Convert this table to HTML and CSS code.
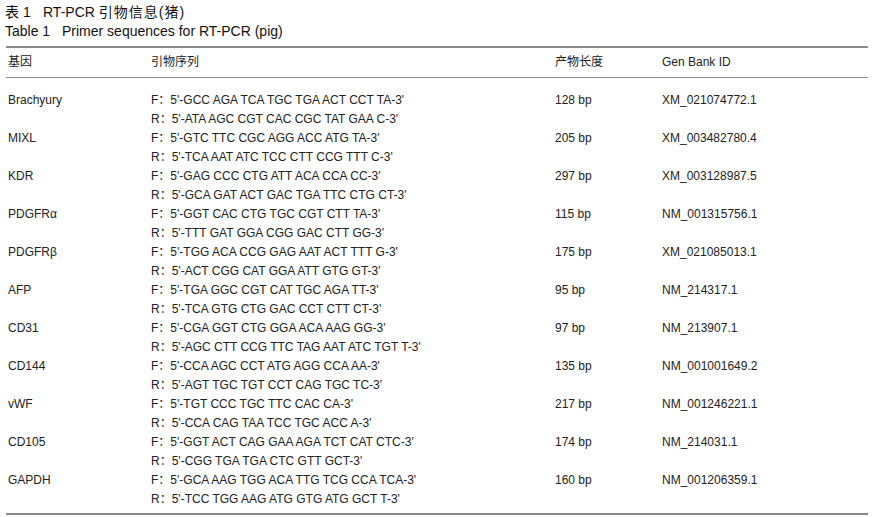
FILE: index.html
```html
<!DOCTYPE html>
<html lang="zh">
<head>
<meta charset="utf-8">
<title>Table 1</title>
<link rel="stylesheet" href="styles.css">
</head>
<body>
<div class="caption">
  <div class="cap-line"><span class="cap-no">表 1</span>RT-PCR <span class="cap-cjk">引物信息(猪)</span></div>
  <div class="cap-line"><span class="cap-no cap-no-en">Table 1</span>Primer sequences for RT-PCR (pig)</div>
</div>
<div class="table">
  <div class="row head">
    <div>基因</div>
    <div class="cjk-head">引物序列</div>
    <div class="cjk-head">产物长度</div>
    <div>Gen Bank ID</div>
  </div>
  <div class="body">
    <div class="row"><div>Brachyury</div><div class="primers"><div>F<span class="sep">：</span>5'-GCC AGA TCA TGC TGA ACT CCT TA-3'</div><div>R<span class="sep">：</span>5'-ATA AGC CGT CAC CGC TAT GAA C-3'</div></div><div>128 bp</div><div>XM_021074772.1</div></div>
    <div class="row"><div>MIXL</div><div class="primers"><div>F<span class="sep">：</span>5'-GTC TTC CGC AGG ACC ATG TA-3'</div><div>R<span class="sep">：</span>5'-TCA AAT ATC TCC CTT CCG TTT C-3'</div></div><div>205 bp</div><div>XM_003482780.4</div></div>
    <div class="row"><div>KDR</div><div class="primers"><div>F<span class="sep">：</span>5'-GAG CCC CTG ATT ACA CCA CC-3'</div><div>R<span class="sep">：</span>5'-GCA GAT ACT GAC TGA TTC CTG CT-3'</div></div><div>297 bp</div><div>XM_003128987.5</div></div>
    <div class="row"><div>PDGFRα</div><div class="primers"><div>F<span class="sep">：</span>5'-GGT CAC CTG TGC CGT CTT TA-3'</div><div>R<span class="sep">：</span>5'-TTT GAT GGA CGG GAC CTT GG-3'</div></div><div>115 bp</div><div>NM_001315756.1</div></div>
    <div class="row"><div>PDGFRβ</div><div class="primers"><div>F<span class="sep">：</span>5'-TGG ACA CCG GAG AAT ACT TTT G-3'</div><div>R<span class="sep">：</span>5'-ACT CGG CAT GGA ATT GTG GT-3'</div></div><div>175 bp</div><div>XM_021085013.1</div></div>
    <div class="row"><div>AFP</div><div class="primers"><div>F<span class="sep">：</span>5'-TGA GGC CGT CAT TGC AGA TT-3'</div><div>R<span class="sep">：</span>5'-TCA GTG CTG GAC CCT CTT CT-3'</div></div><div>95 bp</div><div>NM_214317.1</div></div>
    <div class="row"><div>CD31</div><div class="primers"><div>F<span class="sep">：</span>5'-CGA GGT CTG GGA ACA AAG GG-3'</div><div>R<span class="sep">：</span>5'-AGC CTT CCG TTC TAG AAT ATC TGT T-3'</div></div><div>97 bp</div><div>NM_213907.1</div></div>
    <div class="row"><div>CD144</div><div class="primers"><div>F<span class="sep">：</span>5'-CCA AGC CCT ATG AGG CCA AA-3'</div><div>R<span class="sep">：</span>5'-AGT TGC TGT CCT CAG TGC TC-3'</div></div><div>135 bp</div><div>NM_001001649.2</div></div>
    <div class="row"><div>vWF</div><div class="primers"><div>F<span class="sep">：</span>5'-TGT CCC TGC TTC CAC CA-3'</div><div>R<span class="sep">：</span>5'-CCA CAG TAA TCC TGC ACC A-3'</div></div><div>217 bp</div><div>NM_001246221.1</div></div>
    <div class="row"><div>CD105</div><div class="primers"><div>F<span class="sep">：</span>5'-GGT ACT CAG GAA AGA TCT CAT CTC-3'</div><div>R<span class="sep">：</span>5'-CGG TGA TGA CTC GTT GCT-3'</div></div><div>174 bp</div><div>NM_214031.1</div></div>
    <div class="row"><div>GAPDH</div><div class="primers"><div>F<span class="sep">：</span>5'-GCA AAG TGG ACA TTG TCG CCA TCA-3'</div><div>R<span class="sep">：</span>5'-TCC TGG AAG ATG GTG ATG GCT T-3'</div></div><div>160 bp</div><div>NM_001206359.1</div></div>
  </div>
</div>
</body>
</html>
```
FILE: styles.css
```css
html, body {
  margin: 0;
  padding: 0;
  background: #ffffff;
}
body {
  font-family: "Liberation Sans", "Noto Sans CJK SC", sans-serif;
  font-size: 12px;
  color: #222222;
}
.caption {
  padding: 3px 0 0 5px;
  margin-bottom: 5px;
  font-size: 14px;
  line-height: 19px;
  height: 38px;
  color: #111111;
}
.cap-line {
  height: 19px;
  overflow: hidden;
  white-space: nowrap;
}
.cap-no {
  display: inline-block;
  width: 38px;
}
.cap-no-en {
  width: 57px;
}
.cap-cjk {
  letter-spacing: 1px;
}
.table {
  margin-left: 6px;
  width: 862px;
  border-top: 2px solid #8a8a8a;
  border-bottom: 2px solid #8a8a8a;
}
.row {
  display: grid;
  grid-template-columns: 143px 404px 107px 1fr;
  padding-left: 2px;
  line-height: 19px;
}
.head {
  height: 29px;
  align-items: center;
  border-bottom: 1px solid #8a8a8a;
}
.body {
  padding: 13px 0 4px;
}
.primers div {
  height: 19px;
  white-space: nowrap;
}
.sep {
  display: inline-block;
  height: 12px;
  line-height: 12px;
  font-family: "Noto Sans CJK SC", sans-serif;
}
```
